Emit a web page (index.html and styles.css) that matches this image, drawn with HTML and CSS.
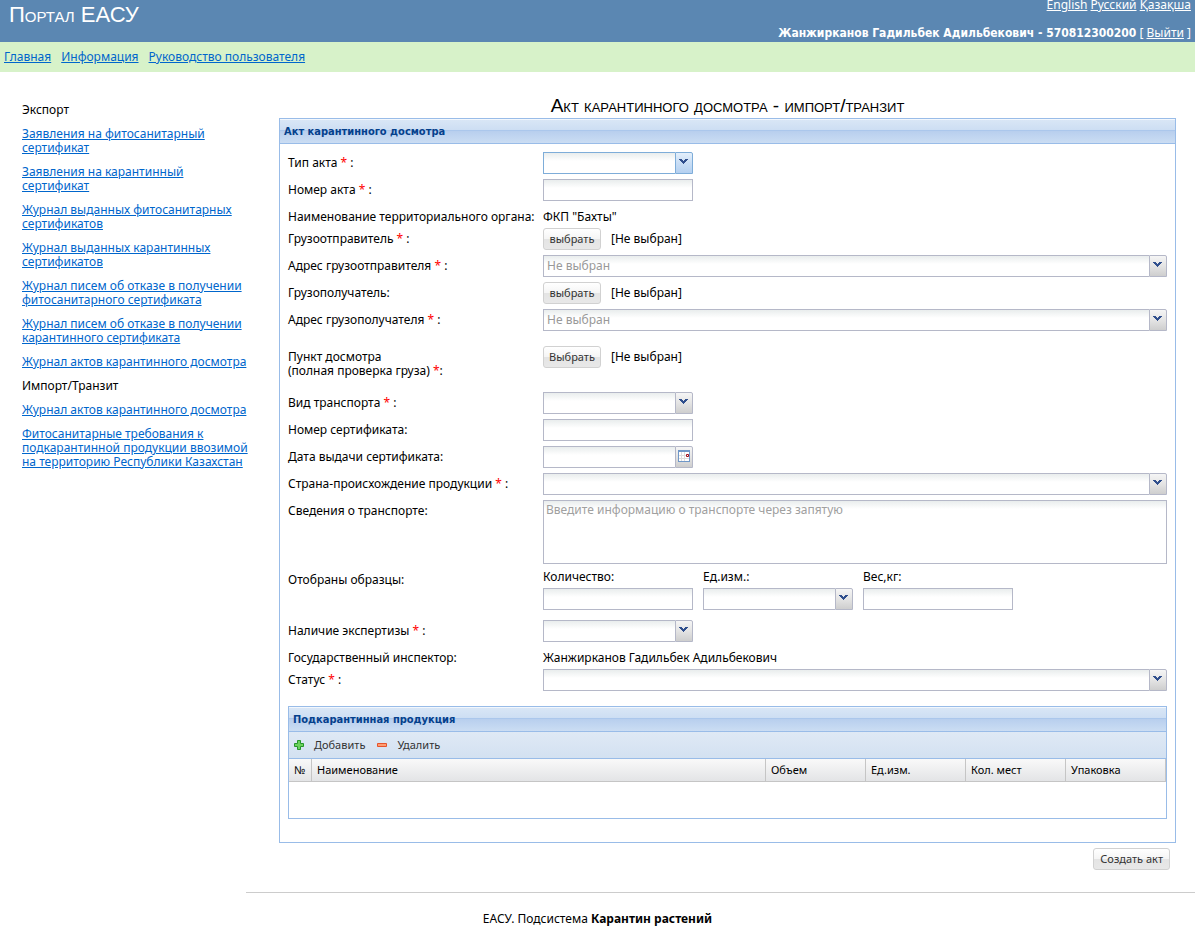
FILE: index.html
```html
<!DOCTYPE html>
<html lang="ru">
<head>
<meta charset="utf-8">
<title>Портал ЕАСУ</title>
<link rel="stylesheet" href="styles.css">
</head>
<body>
<svg class="defs" width="0" height="0" aria-hidden="true">
  <symbol id="chevron" viewBox="0 0 9 6"><path fill="#304f8d" d="M0 0h3v1h1v1h1V1h1V0h3v1H8v1H7v1H6v1H5v1H4V4H3V3H2V2H1V1H0z"/></symbol>
</svg>
<header class="top">
  <div class="brand">Портал ЕАСУ</div>
  <div class="account">
    <div class="langs"><a href="#">English</a> <a href="#">Русский</a> <a href="#">Қазақша</a></div>
    <div class="user"><b>Жанжирканов Гадильбек Адильбекович - 570812300200</b> [ <a href="#">Выйти</a> ]</div>
  </div>
</header>
<nav class="menu"><a href="#">Главная</a><a href="#">Информация</a><a href="#">Руководство пользователя</a></nav>
<div class="layout">
  <aside class="side">
    <div>Экспорт</div>
    <a href="#">Заявления на фитосанитарный<br>сертификат</a>
    <a href="#">Заявления на карантинный<br>сертификат</a>
    <a href="#">Журнал выданных фитосанитарных<br>сертификатов</a>
    <a href="#">Журнал выданных карантинных<br>сертификатов</a>
    <a href="#">Журнал писем об отказе в получении<br>фитосанитарного сертификата</a>
    <a href="#">Журнал писем об отказе в получении<br>карантинного сертификата</a>
    <a href="#">Журнал актов карантинного досмотра</a>
    <div>Импорт/Транзит</div>
    <a href="#">Журнал актов карантинного досмотра</a>
    <a href="#">Фитосанитарные требования к<br>подкарантинной продукции ввозимой<br>на территорию Республики Казахстан</a>
  </aside>
  <main class="main">
    <form class="content">
      <h1>Акт карантинного досмотра - импорт/транзит</h1>
      <section class="panel">
        <h2 class="title">Акт карантинного досмотра</h2>
        <div class="body">
          <div class="row"><label for="type">Тип акта <i>*</i> :</label><div class="combo short focus"><select id="type"><option></option></select><span class="trigger"><svg width="9" height="6"><use href="#chevron"/></svg></span></div></div>
          <div class="row"><label for="num">Номер акта <i>*</i> :</label><input class="text short" id="num" type="text"></div>
          <div class="row fact"><span class="label">Наименование территориального органа:</span><span class="value">ФКП "Бахты"</span></div>
          <div class="row"><label for="sender">Грузоотправитель <i>*</i> :</label><div class="pick"><button class="btn" id="sender" type="button">выбрать</button><span>[Не выбран]</span></div></div>
          <div class="row"><label for="saddr">Адрес грузоотправителя <i>*</i> :</label><div class="combo"><select id="saddr"><option>Не выбран</option></select><span class="trigger"><svg width="9" height="6"><use href="#chevron"/></svg></span></div></div>
          <div class="row"><label for="recv">Грузополучатель:</label><div class="pick"><button class="btn" id="recv" type="button">выбрать</button><span>[Не выбран]</span></div></div>
          <div class="row"><label for="raddr">Адрес грузополучателя <i>*</i> :</label><div class="combo"><select id="raddr"><option>Не выбран</option></select><span class="trigger"><svg width="9" height="6"><use href="#chevron"/></svg></span></div></div>
          <div class="row spaced"><label for="point">Пункт досмотра<br>(полная проверка груза) <i>*</i>:</label><div class="pick"><button class="btn" id="point" type="button">Выбрать</button><span>[Не выбран]</span></div></div>
          <div class="row"><label for="transport">Вид транспорта <i>*</i> :</label><div class="combo short"><select id="transport"><option></option></select><span class="trigger"><svg width="9" height="6"><use href="#chevron"/></svg></span></div></div>
          <div class="row"><label for="cert">Номер сертификата:</label><input class="text short" id="cert" type="text"></div>
          <div class="row"><label for="date">Дата выдачи сертификата:</label><div class="combo short"><input id="date" type="text"><button class="trigger date" type="button" aria-label="Календарь"><svg width="12" height="12" viewBox="0 0 12 12"><path fill="#6f97c8" d="M0 0h12v12H0z"/><path fill="#fff" d="M1 2h10v9H1z"/><path fill="#ddd" d="M3 2h1v9H3zM6 2h1v9H6zM1 5h10v1H1zM1 8h10v1H1z"/><path fill="#fff" stroke="#a00d1b" d="M8.500 4.500h2v2h-2z"/></svg></button></div></div>
          <div class="row"><label for="country">Страна-происхождение продукции <i>*</i> :</label><div class="combo"><select id="country"><option></option></select><span class="trigger"><svg width="9" height="6"><use href="#chevron"/></svg></span></div></div>
          <div class="row"><label for="info">Сведения о транспорте:</label><textarea class="text" id="info" placeholder="Введите информацию о транспорте через запятую"></textarea></div>
          <div class="row samples"><span class="label">Отобраны образцы:</span>
            <div class="trio">
              <div><label for="qty">Количество:</label><input class="text short" id="qty" type="text"></div>
              <div><label for="unit">Ед.изм.:</label><div class="combo short"><select id="unit"><option></option></select><span class="trigger"><svg width="9" height="6"><use href="#chevron"/></svg></span></div></div>
              <div><label for="weight">Вес,кг:</label><input class="text short" id="weight" type="text"></div>
            </div>
          </div>
          <div class="row"><label for="exam">Наличие экспертизы <i>*</i> :</label><div class="combo short"><select id="exam"><option></option></select><span class="trigger"><svg width="9" height="6"><use href="#chevron"/></svg></span></div></div>
          <div class="row fact"><span class="label">Государственный инспектор:</span><span class="value">Жанжирканов Гадильбек Адильбекович</span></div>
          <div class="row"><label for="status">Статус <i>*</i> :</label><div class="combo"><select id="status"><option></option></select><span class="trigger"><svg width="9" height="6"><use href="#chevron"/></svg></span></div></div>
          <section class="panel goods">
            <h2 class="title">Подкарантинная продукция</h2>
            <div class="toolbar">
              <button type="button"><svg width="10" height="10" viewBox="0 0 10 10"><path fill="#6cd25c" stroke="#27962a" d="M3.500 .5h3v3h3v3h-3v3h-3v-3h-3v-3h3z"/></svg>Добавить</button>
              <button type="button"><svg width="10" height="10" viewBox="0 0 10 10"><path fill="#ff9d72" stroke="#e5532c" d="M.5 3.500h9v3h-9z"/></svg>Удалить</button>
            </div>
            <table class="grid">
              <thead><tr><th class="no">№</th><th>Наименование</th><th class="col">Объем</th><th class="col">Ед.изм.</th><th class="col">Кол. мест</th><th class="col">Упаковка</th></tr></thead>
            </table>
          </section>
        </div>
      </section>
      <div class="actions"><button class="btn" type="submit">Создать акт</button></div>
    </form>
    <footer class="foot">ЕАСУ. Подсистема <b>Карантин растений</b></footer>
  </main>
</div>
</body>
</html>
```
FILE: styles.css
```css
* { box-sizing: border-box; }
body { margin: 0; background: #fff; color: #000; font: 12px/14px "Noto Sans", sans-serif; }
.defs { position: absolute; }
a { color: #0066cc; }
button, input, select, textarea { font: inherit; margin: 0; border-radius: 0; }

.top { display: flex; justify-content: space-between; height: 42px; padding: 0 4px 0 9px; background: #5b87b2; color: #fff; }
.top a { color: #fff; }
.brand { font: small-caps 22px/30px "Liberation Sans", sans-serif; }
.account { display: flex; flex-direction: column; justify-content: space-between; text-align: right; padding-bottom: 2px; }
.langs { line-height: 10px; }
.user b { font-family: "DejaVu Sans Condensed", "DejaVu Sans", sans-serif; }
.menu { display: flex; gap: 10px; height: 30px; padding: 8px 4px; background: #d7f2c9; }

.layout { display: flex; }
.side { display: flex; flex-direction: column; align-items: flex-start; gap: 10px; width: 246px; flex: none; padding: 31px 0 0 22px; white-space: nowrap; }
.main { flex: 1; min-width: 0; }
.content { padding: 22px 19px 22px 33px; }
h1 { margin: 0; text-align: center; font: small-caps 19px/24px "Liberation Sans", sans-serif; }

.panel { border: 1px solid #99bce8; }
.title { margin: 0; height: 25px; padding: 5px 4px; border-bottom: 1px solid #99bce8; box-shadow: inset 0 1px #f2f7fd; color: #04408c; font: bold 11px/16px "DejaVu Sans Condensed", "DejaVu Sans", sans-serif; background: linear-gradient(#dae7f6, #cddef3 45%, #abc7ec 46%, #abc7ec 50%, #b8cfee 51%, #cbddf3); }
.body { display: flex; flex-direction: column; gap: 5px; padding: 8px 8px 23px; }
.row { display: grid; grid-template-columns: 255px minmax(0, 1fr); align-items: start; }
.row > label, .label, .value { padding-top: 4px; }
.row i { color: #f00; font-style: normal; }
.fact { height: 17px; }
.spaced { margin: 10px 0 9px; }
.samples { margin-bottom: 5px; }
.trio { display: flex; gap: 10px; padding-top: 1px; }
.trio > div { display: flex; flex-direction: column; gap: 4px; }

.text, .combo select, .combo input { width: 100%; height: 22px; padding: 0 3px; border: 1px solid #b5b8c8; outline: 0; background: linear-gradient(#e9eded, #fff 8px); color: #999; appearance: none; }
.text { display: block; }
textarea.text { height: 64px; padding: 2px; resize: none; }
.text::placeholder { color: #a0a0a0; }
.combo { display: flex; }
.combo select, .combo input { flex: 1; min-width: 0; border-right: 0; }
.combo.short, .text.short { width: 150px; }
.trigger { display: flex; flex: none; align-items: center; justify-content: center; width: 18px; height: 22px; padding: 0 1px 2px 0; border: 1px solid #b5b8c8; border-top-right-radius: 2px; background: linear-gradient(#f5f5f5, #e4e4e4 50%, #cecece); }
.focus select, .focus .trigger { border-color: #7eadd9; }
.focus .trigger { background: linear-gradient(#e4effb, #c9def5 50%, #b4d0f0); }

.pick { display: flex; align-items: center; gap: 10px; height: 22px; }
.btn { min-width: 58px; height: 22px; padding: 0 5px 1px; border: 1px solid #d1d1d1; border-radius: 3px; background: linear-gradient(#fff, #f5f5f5 48%, #e4e4e4 52%, #e8e8e8); color: #333; font-size: 11px; }

.goods { margin-top: 10px; min-height: 113px; }
.toolbar { display: flex; gap: 12px; height: 27px; padding: 0 5px; border-bottom: 1px solid #99bce8; background: linear-gradient(#dfe9f5, #d3e1f1); }
.toolbar button { display: flex; align-items: center; gap: 10px; padding: 0; border: 0; background: none; color: #333; font-size: 11px; }
.grid { width: 100%; table-layout: fixed; border-collapse: separate; border-spacing: 0; }
.grid th { height: 23px; padding: 0 5px; border-right: 1px solid #c5c5c5; border-bottom: 1px solid #c5c5c5; background: linear-gradient(#f9f9f9, #e3e4e6); text-align: left; font-size: 11px; font-weight: 400; }
.grid .no { width: 23px; }
.grid .col { width: 100px; }

.actions { display: flex; justify-content: flex-end; padding: 5px 6px 0 0; }
.actions .btn { padding: 0 6px 1px; }
.foot { padding: 19px 246px 8px 0; border-top: 1px solid #ccc; text-align: center; }
```
